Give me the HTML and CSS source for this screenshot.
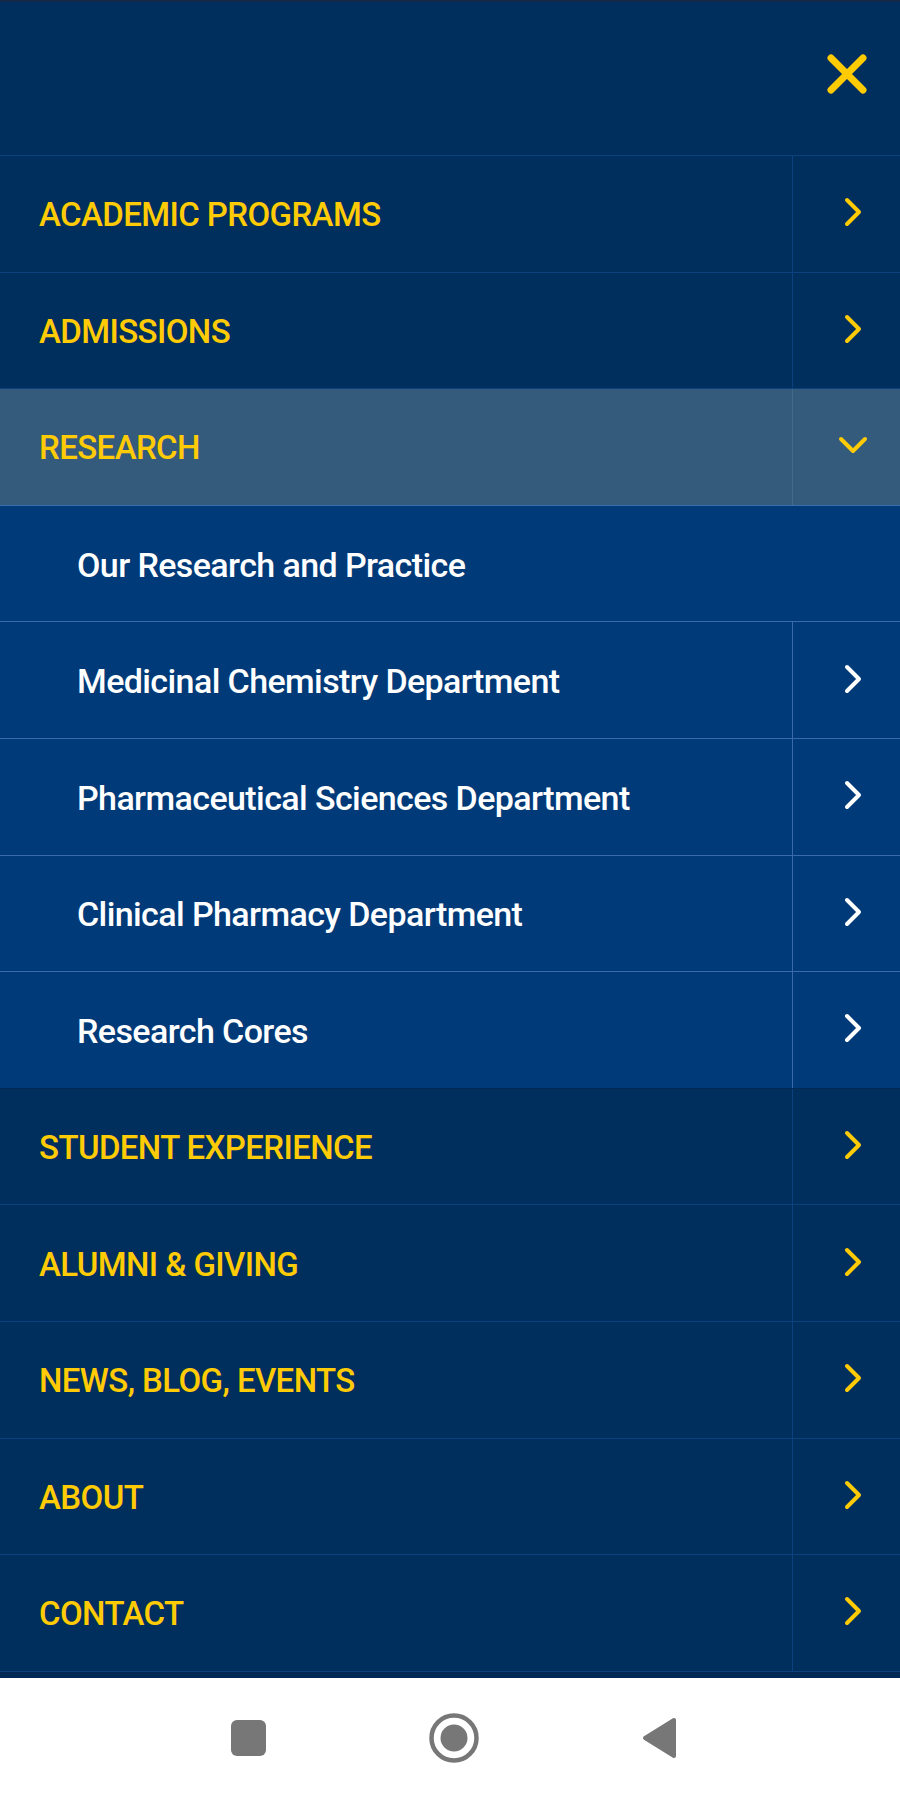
FILE: index.html
```html
<!DOCTYPE html>
<html lang="en">
<head>
<meta charset="utf-8">
<title>Menu</title>
<link rel="stylesheet" href="styles.css">
</head>
<body>
<div class="menu">
  <div class="menu-header">
    <button class="close" aria-label="Close menu">
      <svg width="44" height="44" viewBox="0 0 44 44"><path d="M6 6 L38 38 M38 6 L6 38" stroke="#ffcb05" stroke-width="7" stroke-linecap="round" fill="none"/></svg>
    </button>
  </div>
  <ul class="nav">
    <li class="item top"><a class="label">ACADEMIC PROGRAMS</a><span class="toggle"><svg class="chev" width="22" height="32" viewBox="0 0 22 32"><path d="M5 4 L17 16 L5 28" fill="none" stroke-width="4" stroke-linecap="round" stroke-linejoin="round"/></svg></span></li>
    <li class="item top"><a class="label">ADMISSIONS</a><span class="toggle"><svg class="chev" width="22" height="32" viewBox="0 0 22 32"><path d="M5 4 L17 16 L5 28" fill="none" stroke-width="4" stroke-linecap="round" stroke-linejoin="round"/></svg></span></li>
    <li class="item top open"><a class="label">RESEARCH</a><span class="toggle down"><svg class="chev" width="32" height="22" viewBox="0 0 32 22"><path d="M4 5 L16 17 L28 5" fill="none" stroke-width="4" stroke-linecap="round" stroke-linejoin="round"/></svg></span></li>
    <li class="item sub"><a class="label">Our Research and Practice</a></li>
    <li class="item sub"><a class="label">Medicinal Chemistry Department</a><span class="toggle"><svg class="chev" width="22" height="32" viewBox="0 0 22 32"><path d="M5 4 L17 16 L5 28" fill="none" stroke-width="4" stroke-linecap="round" stroke-linejoin="round"/></svg></span></li>
    <li class="item sub"><a class="label">Pharmaceutical Sciences Department</a><span class="toggle"><svg class="chev" width="22" height="32" viewBox="0 0 22 32"><path d="M5 4 L17 16 L5 28" fill="none" stroke-width="4" stroke-linecap="round" stroke-linejoin="round"/></svg></span></li>
    <li class="item sub"><a class="label">Clinical Pharmacy Department</a><span class="toggle"><svg class="chev" width="22" height="32" viewBox="0 0 22 32"><path d="M5 4 L17 16 L5 28" fill="none" stroke-width="4" stroke-linecap="round" stroke-linejoin="round"/></svg></span></li>
    <li class="item sub last"><a class="label">Research Cores</a><span class="toggle"><svg class="chev" width="22" height="32" viewBox="0 0 22 32"><path d="M5 4 L17 16 L5 28" fill="none" stroke-width="4" stroke-linecap="round" stroke-linejoin="round"/></svg></span></li>
    <li class="item top"><a class="label">STUDENT EXPERIENCE</a><span class="toggle"><svg class="chev" width="22" height="32" viewBox="0 0 22 32"><path d="M5 4 L17 16 L5 28" fill="none" stroke-width="4" stroke-linecap="round" stroke-linejoin="round"/></svg></span></li>
    <li class="item top"><a class="label">ALUMNI &amp; GIVING</a><span class="toggle"><svg class="chev" width="22" height="32" viewBox="0 0 22 32"><path d="M5 4 L17 16 L5 28" fill="none" stroke-width="4" stroke-linecap="round" stroke-linejoin="round"/></svg></span></li>
    <li class="item top"><a class="label">NEWS, BLOG, EVENTS</a><span class="toggle"><svg class="chev" width="22" height="32" viewBox="0 0 22 32"><path d="M5 4 L17 16 L5 28" fill="none" stroke-width="4" stroke-linecap="round" stroke-linejoin="round"/></svg></span></li>
    <li class="item top"><a class="label">ABOUT</a><span class="toggle"><svg class="chev" width="22" height="32" viewBox="0 0 22 32"><path d="M5 4 L17 16 L5 28" fill="none" stroke-width="4" stroke-linecap="round" stroke-linejoin="round"/></svg></span></li>
    <li class="item top"><a class="label">CONTACT</a><span class="toggle"><svg class="chev" width="22" height="32" viewBox="0 0 22 32"><path d="M5 4 L17 16 L5 28" fill="none" stroke-width="4" stroke-linecap="round" stroke-linejoin="round"/></svg></span></li>
  </ul>
</div>
<div class="sysbar">
  <span class="sys-square"></span>
  <svg class="sys-home" width="50" height="50" viewBox="0 0 50 50"><circle cx="25" cy="25" r="22.5" fill="none" stroke="#777777" stroke-width="4.5"/><circle cx="25" cy="25" r="13.5" fill="#777777"/></svg>
  <svg class="sys-back" width="35" height="42" viewBox="0 0 35 42"><path d="M32 3 L32 39 L3 21 Z" fill="#777777" stroke="#777777" stroke-width="4" stroke-linejoin="round"/></svg>
</div>
</body>
</html>
```
FILE: styles.css
```css
* { box-sizing: border-box; }

html, body {
  margin: 0;
  padding: 0;
  background: #ffffff;
}

body {
  width: 900px;
  height: 1797px;
  overflow: hidden;
  font-family: Roboto, "Liberation Sans", Arial, sans-serif;
}

.menu {
  height: 1678px;
  background: #002a55;
  overflow: hidden;
}

.menu-header {
  height: 156px;
  background: #002e5d;
  border-top: 2px solid #14294a;
  border-bottom: 1px solid #0b417c;
  display: flex;
  justify-content: flex-end;
  align-items: flex-start;
  padding: 50px 31px 0 0;
}

.close {
  background: none;
  border: 0;
  padding: 0;
  margin: 0;
  display: block;
  line-height: 0;
}

.nav {
  list-style: none;
  margin: 0;
  padding: 0;
}

.item {
  display: flex;
  height: 116.6px;
  background: #002e5d;
  border-bottom: 1px solid #0b417c;
}

.label {
  flex: 1;
  display: flex;
  align-items: center;
  padding-left: 39px;
  padding-top: 2px;
  font-size: 33px;
  font-weight: 500;
  letter-spacing: -0.6px;
  color: #ffcb05;
  text-decoration: none;
}

.toggle {
  width: 108px;
  flex: none;
  border-left: 1px solid #0b417c;
  display: flex;
  align-items: center;
  padding-left: 49px;
  padding-bottom: 3px;
}

.toggle.down {
  padding-left: 44px;
}

.chev path {
  stroke: #ffcb05;
}

.item.open {
  background: #345a7c;
  border-bottom-color: #3c6fb0;
}

.item.open .toggle {
  border-left-color: #44698f;
}

.item.sub {
  background: #003a78;
  border-bottom-color: #3a6aa8;
}

.item.sub .label {
  padding-left: 77px;
  font-size: 34px;
  color: #ffffff;
}

.item.sub .toggle {
  border-left-color: #3a6aa8;
}

.item.sub .chev path {
  stroke: #ffffff;
}

.item.sub.last {
  border-bottom-color: #022a55;
}

.sysbar {
  height: 119px;
  background: #ffffff;
  display: flex;
  align-items: center;
  justify-content: center;
  gap: 163px;
  padding-left: 7px;
}

.sys-square {
  width: 35px;
  height: 36px;
  border-radius: 6px;
  background: #777777;
  display: block;
}

.sys-home, .sys-back {
  display: block;
}
```
